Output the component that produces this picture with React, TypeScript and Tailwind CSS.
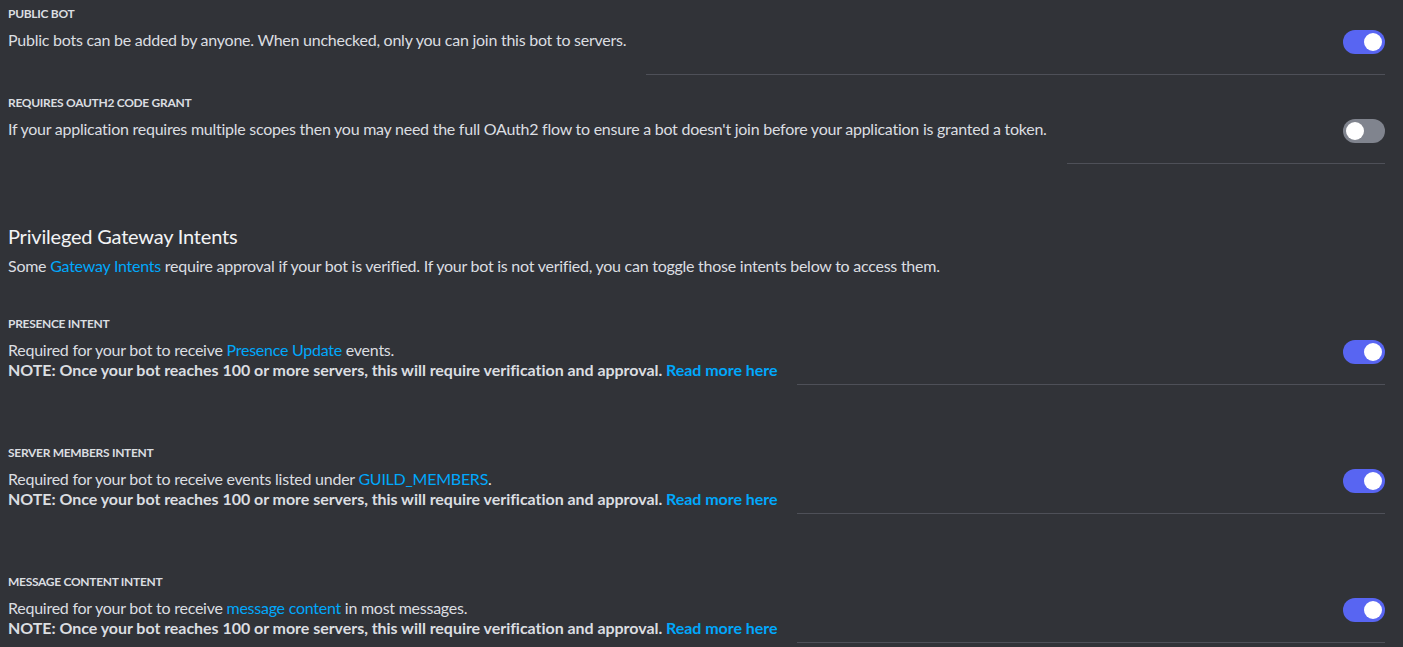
import React from 'react';

function Toggle({ on }: { on: boolean }) {
  return (
    <div
      className={`relative w-[42px] h-6 rounded-full shrink-0 ${on ? 'bg-[#5865f2]' : 'bg-[#80848e]'}`}
    >
      <div
        className={`absolute top-[3px] w-[18px] h-[18px] rounded-full bg-white ${on ? 'right-[3px]' : 'left-[3px]'}`}
      />
    </div>
  );
}

function Link({ children, bold }: { children: React.ReactNode; bold?: boolean }) {
  return <span className={`text-[#00a8fc] ${bold ? 'font-bold' : ''}`}>{children}</span>;
}

function Label({ children }: { children: React.ReactNode }) {
  return (
    <div className="text-[12px] leading-4 font-bold uppercase text-[#dbdee1] tracking-[-0.3px]">
      {children}
    </div>
  );
}

function SettingRow({
  title,
  on,
  children,
}: {
  title: string;
  on: boolean;
  children: React.ReactNode;
}) {
  return (
    <div>
      <Label>{title}</Label>
      <div className="flex items-start mt-2">
        <div className="text-base leading-5 text-[#dbdee1] tracking-[-0.25px]">{children}</div>
        <div className="flex-1 ml-5 pb-5 border-b border-[#4e5058] flex justify-end">
          <Toggle on={on} />
        </div>
      </div>
    </div>
  );
}

function Note() {
  return (
    <div className="font-bold tracking-[-0.04px]">
      NOTE: Once your bot reaches 100 or more servers, this will require verification and approval.{' '}
      <Link bold>Read more here</Link>
    </div>
  );
}

export default function App() {
  return (
    <div
      className="min-h-screen bg-[#313338] pl-2 pr-[18px] pt-[6px] overflow-hidden"
      style={{ fontFamily: 'Lato, sans-serif' }}
    >
      <div className="flex flex-col gap-5">
        <SettingRow title="Public Bot" on>
          Public bots can be added by anyone. When unchecked, only you can join this bot to servers.
        </SettingRow>
        <SettingRow title="Requires OAuth2 Code Grant" on={false}>
          If your application requires multiple scopes then you may need the full OAuth2 flow to ensure a bot doesn't join
          before your application is granted a token.
        </SettingRow>
      </div>

      <div className="mt-[60px]">
        <h2 className="text-[20px] leading-6 font-normal text-[#f2f3f5] tracking-[-0.2px]">Privileged Gateway Intents</h2>
        <p className="mt-2 text-base leading-5 text-[#dbdee1] tracking-[-0.25px]">
          Some <Link>Gateway Intents</Link> require approval if your bot is verified. If your bot is not verified, you can
          toggle those intents below to access them.
        </p>
      </div>

      <div className="mt-10 flex flex-col gap-[60px]">
        <SettingRow title="Presence Intent" on>
          <div>
            Required for your bot to receive <Link>Presence Update</Link> events.
          </div>
          <Note />
        </SettingRow>
        <SettingRow title="Server Members Intent" on>
          <div>
            Required for your bot to receive events listed under <Link>GUILD_MEMBERS</Link>.
          </div>
          <Note />
        </SettingRow>
        <SettingRow title="Message Content Intent" on>
          <div>
            Required for your bot to receive <Link>message content</Link> in most messages.
          </div>
          <Note />
        </SettingRow>
      </div>
    </div>
  );
}
